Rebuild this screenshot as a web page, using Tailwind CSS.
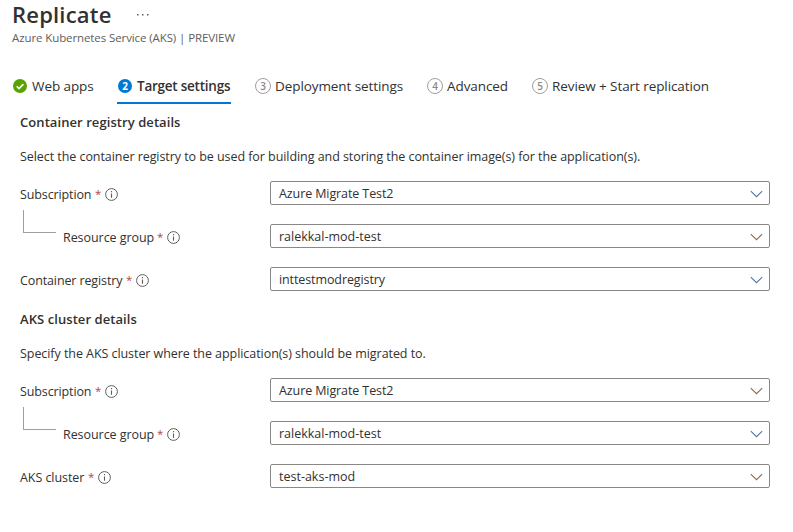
<!DOCTYPE html>
<html lang="en">
<head>
<meta charset="utf-8">
<title>Replicate</title>
<script src="https://cdn.jsdelivr.net/npm/@tailwindcss/browser@4"></script>
</head>
<body class="h-[532px] w-[793px] overflow-hidden bg-white font-['Open_Sans','Noto_Sans',sans-serif] text-[12.5px] leading-5 tracking-[-0.06px] text-[#323130] whitespace-nowrap">
<svg class="hidden">
  <symbol id="info" viewBox="0 0 13 13"><circle cx="6.5" cy="6.5" r="5.9" fill="none" stroke="#605e5c" stroke-width="1"/><path d="M6.5 5.4v4.4M6.5 3.1v1.2" stroke="#605e5c" stroke-width="1.1"/></symbol>
  <symbol id="chevron" viewBox="0 0 13 8"><path d="M.8 1.2 6.5 6.7 12.2 1.2" fill="none" stroke="currentColor" stroke-width="1.1"/></symbol>
</svg>
<header class="h-[75px] pl-3">
  <div class="flex h-7 items-center"><h1 class="-mt-px w-[99px] text-[22px] font-semibold tracking-[0.2px]">Replicate</h1><svg class="ml-[26px] h-[3px] w-3" viewBox="0 0 12 3" fill="#605e5c"><path d="M0 1h1.5v1.5H0zM5 1h1.5v1.5H5zM10 1h1.5v1.5H10z"/></svg></div>
  <p class="text-[11.5px] tracking-[-0.1px] text-[#605e5c]">Azure Kubernetes Service (AKS) | PREVIEW</p>
</header>
<nav class="flex h-[29px] pl-3 text-[13.5px] leading-[23px] tracking-[-0.08px]">
  <div class="flex w-[105px] gap-[5px]"><svg class="mt-1 ml-px h-[14px] w-[14px] shrink-0" viewBox="0 0 14 14"><circle cx="7" cy="7" r="7" fill="#57a300"/><path d="m3.7 7.2 2.3 2.4 4.4-4.5" fill="none" stroke="#fff" stroke-width="1.6"/></svg><span>Web apps</span></div>
  <div class="flex h-[29px] w-[114px] gap-[6px] border-b-2 border-[#0078d4] font-semibold tracking-[-0.24px]"><span class="mt-1 ml-px h-[14px] w-[14px] shrink-0 rounded-full bg-[#0078d4] text-center text-[10px] leading-[14px] font-bold tracking-normal text-white">2</span><span class="-ml-px">Target settings</span></div>
  <div class="ml-6 flex w-[172px] gap-1"><span class="mt-[3px] h-4 w-4 shrink-0 rounded-full border border-[#a19f9d] text-center text-[10px] leading-[14px] font-semibold text-[#8a8886]">3</span><span>Deployment settings</span></div>
  <div class="flex w-[105px] gap-1"><span class="mt-[3px] h-4 w-4 shrink-0 rounded-full border border-[#a19f9d] text-center text-[10px] leading-[14px] font-semibold text-[#8a8886]">4</span><span>Advanced</span></div>
  <div class="flex gap-1"><span class="mt-[3px] h-4 w-4 shrink-0 rounded-full border border-[#a19f9d] text-center text-[10px] leading-[14px] font-semibold text-[#8a8886]">5</span><span>Review + Start replication</span></div>
</nav>
<main class="w-[770px] pl-5">
  <section class="h-[197px] pt-2">
    <h2 class="text-[13px] font-semibold tracking-[0.07px]">Container registry details</h2>
    <p class="mt-[15px]">Select the container registry to be used for building and storing the container image(s) for the application(s).</p>
    <div class="mt-[14px] flex flex-col gap-[19px]">
      <div class="flex h-6"><div class="flex w-[250px] items-center pt-[3px]"><span class="w-[75px] tracking-[-0.12px]">Subscription</span><span class="-mt-0.5 w-[10px] text-[11.5px] text-[#b4444a]">*</span><svg class="h-[13px] w-[13px]"><use href="#info"/></svg></div><div class="flex flex-1 items-center justify-between rounded-xs border border-[#8a8886] pt-0.5 pr-[6px] pl-2"><span class="tracking-[-0.1px]">Azure Migrate Test2</span><svg class="h-2 w-[13px] text-[#5478a8]"><use href="#chevron"/></svg></div></div>
      <div class="flex h-6"><div class="flex w-[250px] items-center pt-[3px] pl-[3px]"><span class="-mt-[33px] mr-[7px] h-[23px] w-[33px] border-b border-l border-[#a19f9d]"></span><span class="w-[94px]">Resource group</span><span class="-mt-0.5 w-[10px] text-[11.5px] text-[#b4444a]">*</span><svg class="h-[13px] w-[13px]"><use href="#info"/></svg></div><div class="flex flex-1 items-center justify-between rounded-xs border border-[#8a8886] pt-0.5 pr-[6px] pl-2"><span class="tracking-[0px]">ralekkal-mod-test</span><svg class="h-2 w-[13px] text-[#93694f]"><use href="#chevron"/></svg></div></div>
      <div class="flex h-6"><div class="flex w-[250px] items-center pt-[3px]"><span class="w-[106px] tracking-[-0.12px]">Container registry</span><span class="-mt-0.5 w-[10px] text-[11.5px] text-[#b4444a]">*</span><svg class="h-[13px] w-[13px]"><use href="#info"/></svg></div><div class="flex flex-1 items-center justify-between rounded-xs border border-[#8a8886] pt-0.5 pr-[6px] pl-2"><span class="tracking-[-0.1px]">inttestmodregistry</span><svg class="h-2 w-[13px] text-[#5478a8]"><use href="#chevron"/></svg></div></div>
    </div>
  </section>
  <section class="pt-2">
    <h2 class="text-[13px] font-semibold tracking-[0.07px]">AKS cluster details</h2>
    <p class="mt-[15px]">Specify the AKS cluster where the application(s) should be migrated to.</p>
    <div class="mt-[14px] flex flex-col gap-[19px]">
      <div class="flex h-6"><div class="flex w-[250px] items-center pt-[3px]"><span class="w-[75px] tracking-[-0.12px]">Subscription</span><span class="-mt-0.5 w-[10px] text-[11.5px] text-[#b4444a]">*</span><svg class="h-[13px] w-[13px]"><use href="#info"/></svg></div><div class="flex flex-1 items-center justify-between rounded-xs border border-[#8a8886] pt-0.5 pr-[6px] pl-2"><span class="tracking-[-0.1px]">Azure Migrate Test2</span><svg class="h-2 w-[13px] text-[#93694f]"><use href="#chevron"/></svg></div></div>
      <div class="flex h-6"><div class="flex w-[250px] items-center pt-[3px] pl-[3px]"><span class="-mt-[33px] mr-[7px] h-[23px] w-[33px] border-b border-l border-[#a19f9d]"></span><span class="w-[94px]">Resource group</span><span class="-mt-0.5 w-[10px] text-[11.5px] text-[#b4444a]">*</span><svg class="h-[13px] w-[13px]"><use href="#info"/></svg></div><div class="flex flex-1 items-center justify-between rounded-xs border border-[#8a8886] pt-0.5 pr-[6px] pl-2"><span class="tracking-[0px]">ralekkal-mod-test</span><svg class="h-2 w-[13px] text-[#5478a8]"><use href="#chevron"/></svg></div></div>
      <div class="flex h-6"><div class="flex w-[250px] items-center pt-[3px]"><span class="w-[68px]">AKS cluster</span><span class="-mt-0.5 w-[10px] text-[11.5px] text-[#b4444a]">*</span><svg class="h-[13px] w-[13px]"><use href="#info"/></svg></div><div class="flex flex-1 items-center justify-between rounded-xs border border-[#8a8886] pt-0.5 pr-[6px] pl-2"><span class="tracking-[0px]">test-aks-mod</span><svg class="h-2 w-[13px] text-[#93694f]"><use href="#chevron"/></svg></div></div>
    </div>
  </section>
</main>
</body>
</html>
